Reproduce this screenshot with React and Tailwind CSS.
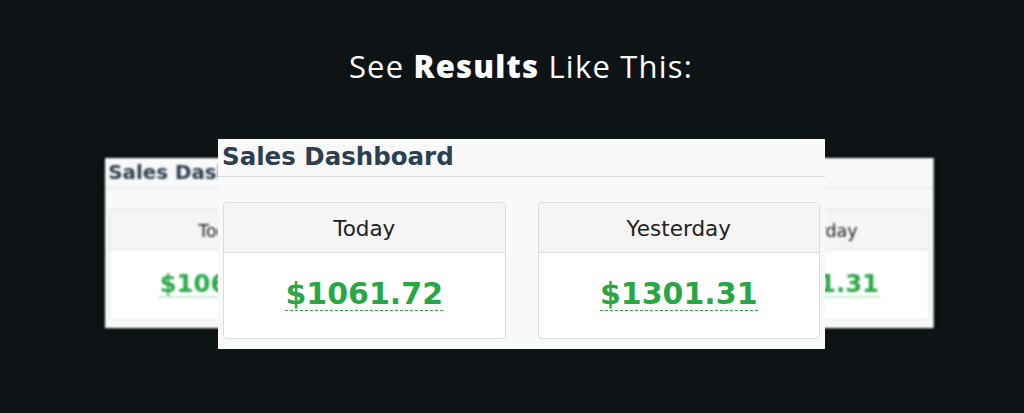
// Results preview: a sales dashboard card with two blurred copies behind it

const stats = [
  { label: 'Today', value: '$1061.72' },
  { label: 'Yesterday', value: '$1301.31' },
];

function DashboardCard() {
  return (
    <div className="w-[607px] h-[210px] bg-[#f9f9f9] font-['DejaVu_Sans',Verdana,sans-serif]">
      {/* Header */}
      <div className="h-[38px] flex items-center px-[4px] border-b border-[#dadada]">
        <h2 className="text-[24.5px] font-bold text-[#2c3e50] leading-none">Sales Dashboard</h2>
      </div>

      {/* Panels */}
      <div className="flex gap-[32px] px-[5px] pt-[25px]">
        {stats.map((s) => (
          <div key={s.label} className="w-[283px] h-[137px] flex flex-col border border-[#dcdcdc] rounded-[4px] overflow-hidden bg-white">
            <div className="h-[50px] flex items-center justify-center pt-[3px] bg-[#f5f5f5] border-b border-[#dcdcdc]">
              <span className="text-[21.5px] text-[#222]">{s.label}</span>
            </div>
            <div className="flex-1 flex items-center justify-center pb-[2px]">
              <span className="inline-block text-[30px] font-bold leading-[32px] text-[#28a745] border-b border-dashed border-[#28a745]">
                {s.value}
              </span>
            </div>
          </div>
        ))}
      </div>
    </div>
  );
}

export default function App() {
  return (
    <div className="w-[1024px] h-[413px] bg-[#0e1316] overflow-hidden">
      <h1 className="pt-[46px] pl-[18px] text-center text-[31px] leading-[40px] tracking-[1.2px] text-white font-['Open_Sans',sans-serif] font-normal">
        See <span className="font-extrabold">Results</span> Like This:
      </h1>

      <div className="relative ml-[218px] mt-[53px] w-[607px]">
        {/* Blurred copies behind */}
        <div className="absolute left-[-113px] top-[19px] origin-top-left scale-[0.81] blur-[1.5px] shadow-[0_0_6px_rgba(0,0,0,0.8)]">
          <DashboardCard />
        </div>
        <div className="absolute left-[224px] top-[19px] origin-top-left scale-[0.81] blur-[1.5px] shadow-[0_0_6px_rgba(0,0,0,0.8)]">
          <DashboardCard />
        </div>

        {/* Front card */}
        <div className="relative">
          <DashboardCard />
        </div>
      </div>
    </div>
  );
}
